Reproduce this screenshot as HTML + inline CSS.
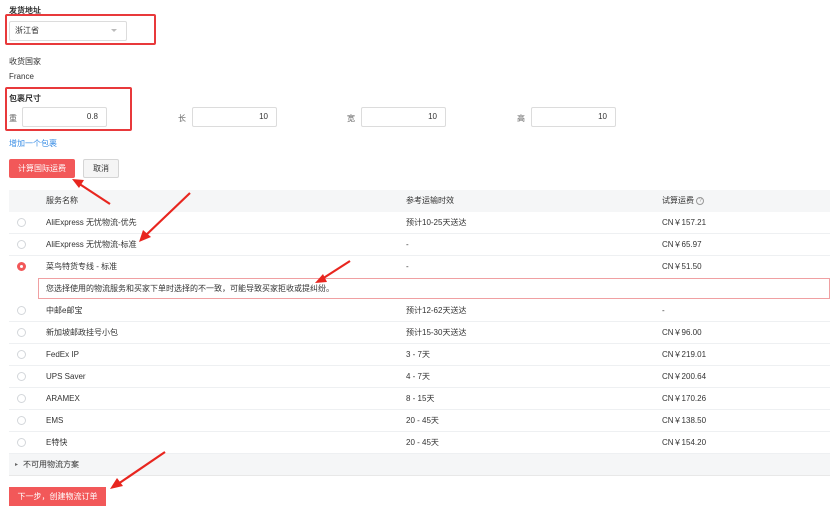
<!DOCTYPE html>
<html><head><meta charset="utf-8"><style>
*{margin:0;padding:0;box-sizing:border-box}
body{width:830px;height:506px;background:#fff;position:relative;overflow:hidden;font-family:"Liberation Sans","Noto Sans CJK SC",sans-serif;font-size:8px;color:#333}
.a{position:absolute;white-space:nowrap}
.inp{position:absolute;border:1px solid #dcdcdc;border-radius:2px;height:20px;background:#fff;text-align:right;padding-right:8px;line-height:18px;font-size:8px;color:#333}
.row{position:absolute;left:9px;width:821px;height:22px;border-bottom:1px solid #eef0f2}
.row span{position:absolute;top:0;height:21px;line-height:21px}
.rad{position:absolute;left:8px;top:6px;width:9px;height:9px;border:1px solid #d3d6da;border-radius:50%}
.red{position:absolute;border:2px solid #e8393b;border-radius:2px}
</style></head><body>
<div class="a" style="left:9px;top:5px;font-weight:bold">发货地址</div>
<div class="inp" style="left:9px;top:21px;width:118px;text-align:left;padding-left:5px">浙江省</div>
<div class="a" style="left:111px;top:29px;width:0;height:0;border:3px solid transparent;border-top-color:#bbb"></div>
<div class="red" style="left:5px;top:14px;width:151px;height:31px"></div>
<div class="a" style="left:9px;top:56px">收货国家</div>
<div class="a" style="left:9px;top:72px">France</div>
<div class="a" style="left:9px;top:93px;font-weight:bold">包裹尺寸</div>
<div class="a" style="left:9px;top:113px;color:#666">重</div>
<div class="inp" style="left:22px;top:107px;width:85px">0.8</div>
<div class="red" style="left:5px;top:87px;width:127px;height:44px"></div>
<div class="a" style="left:178px;top:113px;color:#666">长</div>
<div class="inp" style="left:192px;top:107px;width:85px">10</div>
<div class="a" style="left:347px;top:113px;color:#666">宽</div>
<div class="inp" style="left:361px;top:107px;width:85px">10</div>
<div class="a" style="left:517px;top:113px;color:#666">高</div>
<div class="inp" style="left:531px;top:107px;width:85px">10</div>
<div class="a" style="left:9px;top:138px;color:#3a8ee6">增加一个包裹</div>
<div class="a" style="left:9px;top:159px;width:66px;height:19px;background:#f25859;border-radius:2px;color:#fff;text-align:center;line-height:19px">计算国际运费</div>
<div class="a" style="left:83px;top:159px;width:36px;height:19px;background:#f5f5f5;border:1px solid #d5d5d5;border-radius:2px;text-align:center;line-height:17px">取消</div>

<div class="a" style="left:9px;top:190px;width:821px;height:22px;background:#f5f6f7"></div>
<div class="a" style="left:46px;top:190px;line-height:22px">服务名称</div>
<div class="a" style="left:406px;top:190px;line-height:22px">参考运输时效</div>
<div class="a" style="left:662px;top:190px;line-height:22px">试算运费 <span style="display:inline-block;width:8px;height:8px;border:1px solid #999;border-radius:50%;font-size:6px;line-height:6px;text-align:center;color:#999;vertical-align:middle">?</span></div>

<div class="row" style="top:212px"><div class="rad"></div><span style="left:37px">AliExpress 无忧物流-优先</span><span style="left:397px">预计10-25天送达</span><span style="left:653px">CN￥157.21</span></div>
<div class="row" style="top:234px"><div class="rad"></div><span style="left:37px">AliExpress 无忧物流-标准</span><span style="left:397px">-</span><span style="left:653px">CN￥65.97</span></div>
<div class="row" style="top:256px;border:none"><div class="rad" style="border:3px solid #f25859"></div><span style="left:37px">菜鸟特货专线 - 标准</span><span style="left:397px">-</span><span style="left:653px">CN￥51.50</span></div>
<div class="a" style="left:38px;top:278px;width:792px;height:21px;border:1px solid #f0a0a2;padding-left:7px;line-height:19px">您选择使用的物流服务和买家下单时选择的不一致，可能导致买家拒收或提纠纷。</div>
<div class="row" style="top:300px"><div class="rad"></div><span style="left:37px">中邮e邮宝</span><span style="left:397px">预计12-62天送达</span><span style="left:653px">-</span></div>
<div class="row" style="top:322px"><div class="rad"></div><span style="left:37px">新加坡邮政挂号小包</span><span style="left:397px">预计15-30天送达</span><span style="left:653px">CN￥96.00</span></div>
<div class="row" style="top:344px"><div class="rad"></div><span style="left:37px">FedEx IP</span><span style="left:397px">3 - 7天</span><span style="left:653px">CN￥219.01</span></div>
<div class="row" style="top:366px"><div class="rad"></div><span style="left:37px">UPS Saver</span><span style="left:397px">4 - 7天</span><span style="left:653px">CN￥200.64</span></div>
<div class="row" style="top:388px"><div class="rad"></div><span style="left:37px">ARAMEX</span><span style="left:397px">8 - 15天</span><span style="left:653px">CN￥170.26</span></div>
<div class="row" style="top:410px"><div class="rad"></div><span style="left:37px">EMS</span><span style="left:397px">20 - 45天</span><span style="left:653px">CN￥138.50</span></div>
<div class="row" style="top:432px"><div class="rad"></div><span style="left:37px">E特快</span><span style="left:397px">20 - 45天</span><span style="left:653px">CN￥154.20</span></div>
<div class="a" style="left:9px;top:454px;width:821px;height:22px;background:#f5f6f7;border-bottom:1px solid #e8e8e8"></div>
<div class="a" style="left:15px;top:454px;line-height:22px;font-size:6px;color:#666">▸</div>
<div class="a" style="left:23px;top:454px;line-height:22px">不可用物流方案</div>
<div class="a" style="left:9px;top:487px;width:97px;height:19px;background:#f25859;color:#fff;text-align:center;line-height:19px">下一步，创建物流订单</div>

<svg class="a" style="left:0;top:0" width="830" height="506">
<g stroke="#e8261f" stroke-width="2.2" fill="#e8261f">
<line x1="110" y1="204" x2="78" y2="183"/><polygon points="72,179 84,180 79,188" stroke="none"/>
<line x1="190" y1="193" x2="145" y2="236"/><polygon points="139,242 143,230 151,237" stroke="none"/>
<line x1="350" y1="261" x2="322" y2="279"/><polygon points="315,283 323,274 327,282" stroke="none"/>
<line x1="165" y1="452" x2="118" y2="484"/><polygon points="110,489 117,478 123,486" stroke="none"/>
</g></svg>
</body></html>
